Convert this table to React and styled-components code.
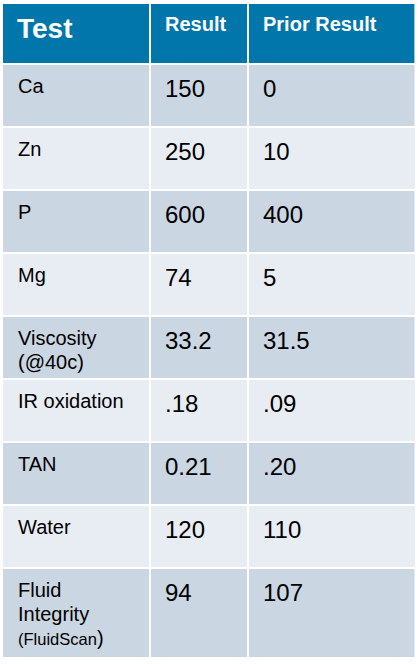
import React from 'react';
import styled, {createGlobalStyle} from "styled-components";

const GlobalStyle = createGlobalStyle`
  html, body {
    margin: 0;
    padding: 0;
    background: #ffffff;
  }
  body {
    font-family: "Liberation Sans", Arial, sans-serif;
  }
`;

const Page = styled.div`
  width: 419px;
  height: 664px;
  padding: 4px 0 0 3px;
  box-sizing: border-box;
  background: #ffffff;
`;

const Table = styled.div`
  display: grid;
  grid-template-columns: 146px 96px 165px;
  grid-template-rows: 59px repeat(8, 61px) 88px;
  column-gap: 2px;
  row-gap: 2px;
  width: max-content;
`;

const HeaderCell = styled.div`
  background: #0076ab;
  color: #ffffff;
  font-weight: bold;
  font-size: ${p => (p.$big ? "28px" : "20px")};
  line-height: ${p => (p.$big ? "32px" : "24px")};
  padding: ${p => (p.$big ? "9px" : "8px")} 0 0 14px;
  box-shadow: ${p => (p.$last ? "1px 0 0 #9cc6dc" : "none")};
`;

const Cell = styled.div`
  background: ${p => (p.$dark ? "#cad6e2" : "#e8edf4")};
  color: #000000;
  padding: 9px 0 0 14px;
  box-shadow: ${p => (p.$last ? "1px 0 0 #e4ecf4" : "none")};
`;

const Label = styled.div`
  font-size: 20px;
  line-height: 24px;
  margin-left: 1px;
`;

const Small = styled.span`
  font-size: 16.5px;
`;

const Value = styled.div`
  font-size: 24px;
  line-height: 28px;
  padding-top: 1px;
`;

const rows = [
    {test: ["Ca"], result: "150", prior: "0"},
    {test: ["Zn"], result: "250", prior: "10"},
    {test: ["P"], result: "600", prior: "400"},
    {test: ["Mg"], result: "74", prior: "5"},
    {test: ["Viscosity", "(@40c)"], result: "33.2", prior: "31.5"},
    {test: ["IR oxidation"], result: ".18", prior: ".09"},
    {test: ["TAN"], result: "0.21", prior: ".20"},
    {test: ["Water"], result: "120", prior: "110"},
    {test: ["Fluid", "Integrity", "small"], result: "94", prior: "107"},
];

function App() {
    return (
        <>
            <GlobalStyle />
            <Page>
                <Table>
                    <HeaderCell $big>Test</HeaderCell>
                    <HeaderCell>Result</HeaderCell>
                    <HeaderCell $last>Prior Result</HeaderCell>
                    {rows.map((row, i) => {
                        const dark = i % 2 === 0;
                        return (
                            <React.Fragment key={i}>
                                <Cell $dark={dark}>
                                    {row.test.map((line, j) => (
                                        <Label key={j}>
                                            {line === "small" ? <><Small>(FluidScan</Small>)</> : line}
                                        </Label>
                                    ))}
                                </Cell>
                                <Cell $dark={dark}><Value>{row.result}</Value></Cell>
                                <Cell $dark={dark} $last><Value>{row.prior}</Value></Cell>
                            </React.Fragment>
                        );
                    })}
                </Table>
            </Page>
        </>
    );
}

export default App;
